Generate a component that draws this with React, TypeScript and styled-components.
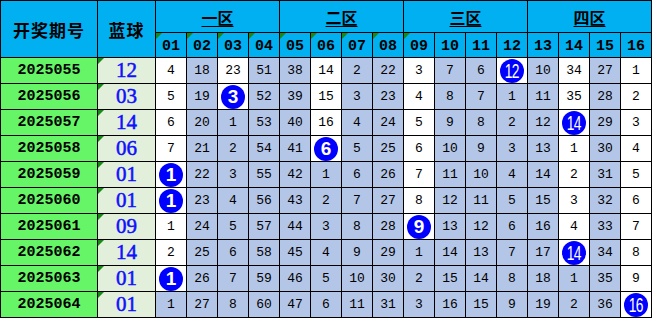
import React from "react";
import styled, { createGlobalStyle, css } from "styled-components";

const GlobalStyle = createGlobalStyle`
  body {
    margin: 0;
    background: #ffffff;
  }
`;

const colors = {
  head: "#00b0f0",
  period: "#66f566",
  blueCol: "#e2efda",
  cell: "#b4c6e7",
  white: "#ffffff",
  ball: "#0000ff",
  line: "#000000",
};

// ball positions per row are stored as 0 in the data
const rows: { period: string; blue: string; nums: number[]; white: number[] }[] = [
  { period: "2025055", blue: "12", nums: [4, 18, 23, 51, 38, 14, 2, 22, 3, 7, 6, 0, 10, 34, 27, 1], white: [1, 3, 6, 9, 12, 14, 16] },
  { period: "2025056", blue: "03", nums: [5, 19, 0, 52, 39, 15, 3, 23, 4, 8, 7, 1, 11, 35, 28, 2], white: [1, 3, 6, 9, 14, 16] },
  { period: "2025057", blue: "14", nums: [6, 20, 1, 53, 40, 16, 4, 24, 5, 9, 8, 2, 12, 0, 29, 3], white: [1, 6, 9, 14, 16] },
  { period: "2025058", blue: "06", nums: [7, 21, 2, 54, 41, 0, 5, 25, 6, 10, 9, 3, 13, 1, 30, 4], white: [1, 6, 9, 14, 16] },
  { period: "2025059", blue: "01", nums: [0, 22, 3, 55, 42, 1, 6, 26, 7, 11, 10, 4, 14, 2, 31, 5], white: [1, 9, 14, 16] },
  { period: "2025060", blue: "01", nums: [0, 23, 4, 56, 43, 2, 7, 27, 8, 12, 11, 5, 15, 3, 32, 6], white: [1, 9, 14, 16] },
  { period: "2025061", blue: "09", nums: [1, 24, 5, 57, 44, 3, 8, 28, 0, 13, 12, 6, 16, 4, 33, 7], white: [1, 9, 14, 16] },
  { period: "2025062", blue: "14", nums: [2, 25, 6, 58, 45, 4, 9, 29, 1, 14, 13, 7, 17, 0, 34, 8], white: [1, 14, 16] },
  { period: "2025063", blue: "01", nums: [0, 26, 7, 59, 46, 5, 10, 30, 2, 15, 14, 8, 18, 1, 35, 9], white: [1, 16] },
  { period: "2025064", blue: "01", nums: [1, 27, 8, 60, 47, 6, 11, 31, 3, 16, 15, 9, 19, 2, 36, 0], white: [16] },
];

const zones = ["一区", "二区", "三区", "四区"];

const Sheet = styled.div`
  display: grid;
  grid-template-columns: 97px 58px repeat(16, 31px);
  grid-template-rows: 32px 25px repeat(10, 26px);
  width: 652px;
  border-top: 1px solid ${colors.line};
  border-left: 1px solid ${colors.line};
  box-sizing: border-box;
`;

const cellBase = css`
  position: relative;
  box-sizing: border-box;
  border-right: 1px solid ${colors.line};
  border-bottom: 1px solid ${colors.line};
  display: flex;
  align-items: center;
  justify-content: center;
  overflow: hidden;
`;

const Marker = styled.span`
  position: absolute;
  top: 0;
  left: 0;
  width: 0;
  height: 0;
  border-top: 6px solid #178a17;
  border-right: 6px solid transparent;
`;

const TitleCell = styled.div`
  ${cellBase};
  grid-row: span 2;
  background: ${colors.head};
  font-family: "Noto Sans CJK SC", sans-serif;
  font-weight: 700;
  font-size: 17px;
  letter-spacing: 1px;
  color: #000;
`;

const ZoneCell = styled.div`
  ${cellBase};
  grid-column: span 4;
  background: ${colors.head};
  font-family: "Noto Sans CJK SC", sans-serif;
  font-weight: 700;
  font-size: 16px;
  color: #000;
  span {
    text-decoration: underline;
    text-underline-offset: 2px;
  }
`;

const NumHead = styled.div`
  ${cellBase};
  background: ${colors.head};
  font-family: "Liberation Mono", monospace;
  font-weight: 700;
  font-size: 15px;
  color: #000;
  padding-top: 2px;
`;

const PeriodCell = styled.div`
  ${cellBase};
  background: ${colors.period};
  font-family: "Liberation Mono", monospace;
  font-weight: 700;
  font-size: 15px;
  color: #000;
`;

const BlueCell = styled.div`
  ${cellBase};
  background: ${colors.blueCol};
  font-family: "Liberation Serif", serif;
  font-size: 21px;
  color: #1010ff;
  -webkit-text-stroke: 0.5px #1010ff;
`;

const DataCell = styled.div<{ $white: boolean }>`
  ${cellBase};
  background: ${({ $white }) => ($white ? colors.white : colors.cell)};
  font-family: "Liberation Mono", monospace;
  font-size: 13px;
  color: #000;
`;

const Ball = styled.span<{ $wide: boolean }>`
  display: flex;
  align-items: center;
  justify-content: center;
  width: 24px;
  height: 24px;
  border-radius: 50%;
  background: ${colors.ball};
  color: #fff;
  font-family: "Liberation Sans", sans-serif;
  font-weight: 700;
  font-size: ${({ $wide }) => ($wide ? "21px" : "19px")};
  line-height: 1;
  span {
    display: inline-block;
    transform: ${({ $wide }) => ($wide ? "scaleX(0.66)" : "none")};
    letter-spacing: ${({ $wide }) => ($wide ? "-1px" : "0")};
    font-weight: ${({ $wide }) => ($wide ? 400 : 700)};
  }
`;

const pad = (n: number) => String(n).padStart(2, "0");

export default function App() {
  return (
    <>
      <GlobalStyle />
      <Sheet>
        <TitleCell>开奖期号</TitleCell>
        <TitleCell>蓝球</TitleCell>
        {zones.map((z) => (
          <ZoneCell key={z}>
            <span>{z}</span>
          </ZoneCell>
        ))}
        {Array.from({ length: 16 }, (_, i) => (
          <NumHead key={i}>
            {i < 9 && <Marker />}
            {pad(i + 1)}
          </NumHead>
        ))}
        {rows.map((r) => (
          <React.Fragment key={r.period}>
            <PeriodCell>{r.period}</PeriodCell>
            <BlueCell>
              <Marker />
              {r.blue}
            </BlueCell>
            {r.nums.map((n, i) => (
              <DataCell key={i} $white={r.white.includes(i + 1)}>
                {n === 0 ? (
                  <Ball $wide={i + 1 > 9}>
                    <span>{i + 1}</span>
                  </Ball>
                ) : (
                  n
                )}
              </DataCell>
            ))}
          </React.Fragment>
        ))}
      </Sheet>
    </>
  );
}
